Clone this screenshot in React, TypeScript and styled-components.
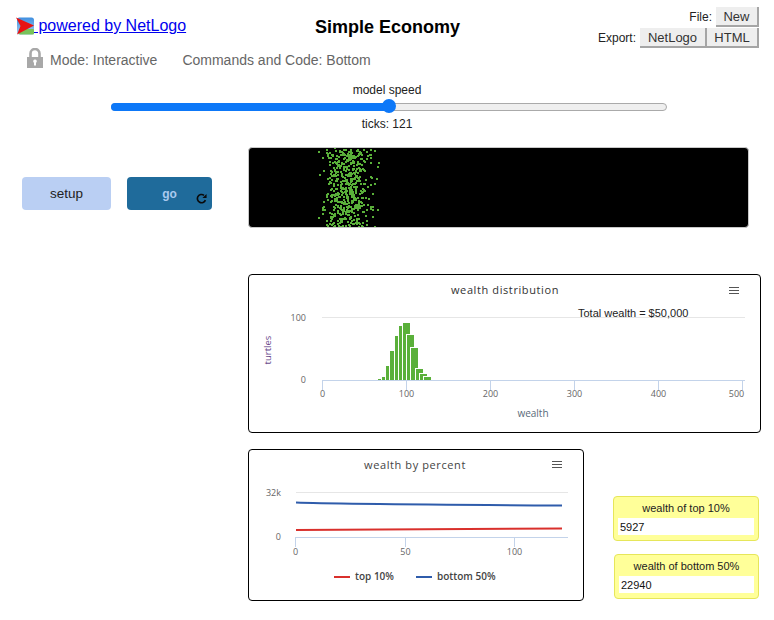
import React from 'react';
import styled, { createGlobalStyle } from 'styled-components';

const Global = createGlobalStyle`
  html, body { margin: 0; padding: 0; background: #fff; }
  body { font-family: "Liberation Sans", Arial, sans-serif; color: #000; }
`;

const Page = styled.div`
  width: 774px;
  height: 620px;
  overflow: hidden;
`;
const Header = styled.header`
  display: grid;
  grid-template-columns: 1fr auto 1fr;
  height: 49px;
  padding: 0 15px 0 16px;
  box-sizing: border-box;
`;
const BrandLink = styled.a`
  display: flex;
  align-items: flex-start;
  margin-top: 17px;
  height: 20px;
  font-size: 16px;
  line-height: 18px;
  color: #0000ee;
  text-decoration: underline;
  white-space: nowrap;
`;
const Title = styled.h1`
  margin: 17px 0 0;
  font-size: 18px;
  line-height: 20px;
  font-weight: bold;
`;
const Actions = styled.div`
  display: flex;
  flex-direction: column;
  align-items: flex-end;
  padding-top: 7px;
  gap: 1px;
`;
const ActionRow = styled.div`
  display: flex;
  align-items: center;
  font-size: 12px;
  color: #222;
`;
const ActionLabel = styled.span`
  margin-right: 4px;
`;
const FileButton = styled.button`
  height: 20px;
  width: ${p => p.$w}px;
  padding: 0;
  box-sizing: border-box;
  border: none;
  border-right: 2px solid #a5a5a5;
  border-bottom: 2px solid #a5a5a5;
  background: #eee;
  font: 13px "Liberation Sans", Arial, sans-serif;
  color: #333;
`;
const ModeRow = styled.div`
  display: flex;
  align-items: center;
  height: 22px;
  padding-left: 27px;
  font-size: 14px;
  color: #666;
`;
const LockIcon = styled.svg`
  margin-top: -4px;
`;
const ModeText = styled.span`
  margin-left: ${p => p.$gap}px;
`;
const SpeedPanel = styled.div`
  display: flex;
  flex-direction: column;
  align-items: center;
  width: 556px;
  margin: 12px 0 0 111px;
  font-size: 12px;
  color: #222;
`;
const SpeedLabel = styled.div`
  height: 14px;
  line-height: 14px;
  margin-left: -4px;
`;
const Track = styled.div`
  position: relative;
  width: 100%;
  height: 8px;
  margin: 6px 0;
  box-sizing: border-box;
  border: 1px solid #aaa;
  border-radius: 4px;
  background: #efefef;
`;
const TrackFill = styled.div`
  position: absolute;
  left: -1px;
  top: -1px;
  height: 8px;
  border-radius: 4px;
  background: #0d78f8;
`;
const Thumb = styled.div`
  position: absolute;
  top: -5px;
  width: 14px;
  height: 14px;
  margin-left: -7px;
  border-radius: 50%;
  background: #0d78f8;
`;
const Canvas = styled.div`
  display: grid;
  grid-template-columns: 248px 1fr;
  margin-top: 16px;
`;
const Controls = styled.div`
  display: flex;
  align-items: flex-start;
  gap: 16px;
  padding: 30px 0 0 22px;
`;
const ModelButton = styled.button`
  position: relative;
  width: ${p => p.$w}px;
  height: 33px;
  padding: 0;
  border: none;
  border-radius: 4px;
  background: ${p => (p.$active ? '#1f6b9b' : '#bacff3')};
  color: ${p => (p.$active ? '#a9c9ee' : '#222')};
  font: ${p => (p.$active ? 'bold 12px' : 'normal 13.5px')} "Liberation Sans", Arial, sans-serif;
`;
const ForeverIcon = styled.svg`
  position: absolute;
  right: 5px;
  bottom: 6px;
`;
const Stage = styled.div`
  display: flex;
  flex-direction: column;
`;
const World = styled.svg`
  display: block;
  width: 501px;
  height: 81px;
  box-sizing: border-box;
  border: 1px solid #c8c8c8;
  border-radius: 4px;
  background: #000;
  margin-bottom: 46px;
`;
const PlotCard = styled.div`
  width: ${p => p.$w}px;
  height: ${p => p.$h}px;
  box-sizing: border-box;
  border: 1px solid #000;
  border-radius: 4px;
  background: #fff;
  flex: none;
`;
const PlotSvg = styled.svg`
  display: block;
  width: 100%;
  height: 100%;
  font-family: "Open Sans", "DejaVu Sans", sans-serif;
`;
const BottomRow = styled.div`
  display: flex;
  align-items: flex-start;
  margin-top: 16px;
`;
const Monitors = styled.div`
  display: flex;
  flex-direction: column;
  align-items: flex-end;
  gap: 13px;
  width: 146px;
  margin: 47px 0 0 29px;
`;
const Monitor = styled.div`
  width: ${p => p.$w}px;
  height: 45px;
  box-sizing: border-box;
  padding: 0 4px;
  border: 1px solid #e6e65a;
  border-radius: 4px;
  background: #ffff99;
  font-size: 11px;
  color: #222;
`;
const MonitorLabel = styled.div`
  height: 21px;
  line-height: 23px;
  text-align: center;
`;
const MonitorValue = styled.div`
  height: 17px;
  line-height: 18px;
  padding-left: 2px;
  background: #fff;
  color: #111;
`;

function Logo() {
  return (
    <svg width="18" height="18" viewBox="0 0 18 18">
      <defs>
        <linearGradient id="sky" x1="0" y1="0" x2="0" y2="1">
          <stop offset="0" stopColor="#3f8fe0" />
          <stop offset="1" stopColor="#a5cdf0" />
        </linearGradient>
      </defs>
      <rect x="1" y="0.5" width="17" height="17" rx="2.5" fill="url(#sky)" />
      <rect x="3" y="12" width="15" height="5.5" rx="1" fill="#79c25a" />
      <path d="M0 0.5 L18 8.5 L1 17.5 L4.5 9 Z" fill="#e81313" />
    </svg>
  );
}

function Lock() {
  return (
    <LockIcon width="16" height="20" viewBox="0 0 16 20">
      <path d="M3.5 9V5.5a4.5 4.5 0 0 1 9 0V9" fill="none" stroke="#a8a8a8" strokeWidth="2.6" />
      <path fillRule="evenodd" d="M0 9h16v11H0z M8 11.5a1.8 1.8 0 0 0-1 3.3V17.5h2v-2.7a1.8 1.8 0 0 0-1-3.3z" fill="#a8a8a8" />
    </LockIcon>
  );
}

function makeDots() {
  let s = 12345;
  const r = () => {
    s = (s * 1664525 + 1013904223) % 4294967296;
    return s / 4294967296;
  };
  const dots: { x: number; y: number }[] = [];
  for (let i = 0; i < 520; i++) {
    const g = (r() + r() + r() + r() - 2) * 1.73;
    dots.push({ x: Math.round(99 + g * 12.5), y: Math.round(r() * 80) });
  }
  return dots;
}
const dots = makeDots();

const ox1 = 249;
const oy1 = 275;
const bars = [
  [378, 381, 379], [382, 385, 377], [386, 389, 366], [390, 394, 351], [395, 398, 336], [399, 402, 326],
  [403, 410, 323], [407, 414, 335], [411, 418, 348], [416, 423, 369], [420, 427, 374], [424, 431, 377],
];
const GREEN = '#5ab03a';
const AXIS = '#c3d3ea';
const GRIDC = '#e6e6e6';
const LABEL = '#666666';

function Burger({ x, y }: { x: number; y: number }) {
  return (
    <g stroke="#555" strokeWidth="1">
      <line x1={x} x2={x + 10} y1={y + 0.5} y2={y + 0.5} />
      <line x1={x} x2={x + 10} y1={y + 3.5} y2={y + 3.5} />
      <line x1={x} x2={x + 10} y1={y + 6.5} y2={y + 6.5} />
    </g>
  );
}

function DistributionPlot() {
  return (
    <PlotSvg viewBox="0 0 511 157">
      <text x={505 - ox1} y={294 - oy1} textAnchor="middle" fontSize="11" letterSpacing="0.6" fill="#333">wealth distribution</text>
      <Burger x={729 - ox1} y={287 - oy1} />
      <line x1={322 - ox1} x2={745 - ox1} y1={317.5 - oy1} y2={317.5 - oy1} stroke={GRIDC} />
      <line x1={322 - ox1} x2={745 - ox1} y1={380.5 - oy1} y2={380.5 - oy1} stroke={AXIS} />
      {[322.5, 406.5, 490.5, 574.5, 658.5, 742.5].map((x, i) => (
        <g key={x}>
          <line x1={x - ox1} x2={x - ox1} y1={380 - oy1} y2={390 - oy1} stroke={AXIS} />
          <text x={x - ox1 + (i === 5 ? -6 : 0)} y={397 - oy1} textAnchor="middle" fontSize="9" fill={LABEL}>{i * 100}</text>
        </g>
      ))}
      <text x={306 - ox1} y={321 - oy1} textAnchor="end" fontSize="9" fill={LABEL}>100</text>
      <text x={306 - ox1} y={383 - oy1} textAnchor="end" fontSize="9" fill={LABEL}>0</text>
      <text transform={`translate(${271 - ox1} ${350 - oy1}) rotate(-90)`} textAnchor="middle" fontSize="9.5" fill="#6a4a8c">turtles</text>
      <text x={533 - ox1} y={417 - oy1} textAnchor="middle" fontSize="10" fill="#5a6a7a">wealth</text>
      {bars.map(([a, b, t]) => (
        <g key={a}>
          <rect x={a - 1 - ox1} y={t - 1 - oy1} width={b - a + 1} height={381 - t} fill="#fff" />
          <rect x={a - ox1} y={t - oy1} width={b - a} height={380 - t} fill={GREEN} />
        </g>
      ))}
      <text x={578 - ox1} y={317 - oy1} fontSize="11" fontFamily='"Liberation Sans", Arial, sans-serif' fill="#222">Total wealth = $50,000</text>
    </PlotSvg>
  );
}

const ox2 = 249;
const oy2 = 450;
function PercentPlot() {
  return (
    <PlotSvg viewBox="0 0 334 150">
      <text x={415 - ox2} y={469 - oy2} textAnchor="middle" fontSize="11" letterSpacing="0.6" fill="#444">wealth by percent</text>
      <Burger x={552 - ox2} y={461 - oy2} />
      <line x1={296 - ox2} x2={568 - ox2} y1={492.5 - oy2} y2={492.5 - oy2} stroke={GRIDC} />
      <line x1={296 - ox2} x2={568 - ox2} y1={537.5 - oy2} y2={537.5 - oy2} stroke={AXIS} />
      {[[295.5, 0], [405.5, 50], [514.5, 100]].map(([x, v]) => (
        <g key={x}>
          <line x1={x - ox2} x2={x - ox2} y1={537 - oy2} y2={547 - oy2} stroke={AXIS} />
          <text x={x - ox2} y={555 - oy2} textAnchor="middle" fontSize="9" fill={LABEL}>{v}</text>
        </g>
      ))}
      <text x={281 - ox2} y={496 - oy2} textAnchor="end" fontSize="9" fill={LABEL}>32k</text>
      <text x={281 - ox2} y={540 - oy2} textAnchor="end" fontSize="9" fill={LABEL}>0</text>
      <path d={`M${296 - ox2} ${502.5 - oy2} C${330 - ox2} ${504 - oy2} ${400 - ox2} ${504.5 - oy2} ${562 - ox2} ${505.5 - oy2}`} fill="none" stroke="#2f5cab" strokeWidth="2" />
      <path d={`M${296 - ox2} ${530 - oy2} L${562 - ox2} ${528.5 - oy2}`} fill="none" stroke="#d9302c" strokeWidth="2" />
      <line x1={334 - ox2} x2={350 - ox2} y1={577 - oy2} y2={577 - oy2} stroke="#d9302c" strokeWidth="2" />
      <text x={355 - ox2} y={580 - oy2} fontSize="10" fontWeight="600" fill="#444">top 10%</text>
      <line x1={416 - ox2} x2={432 - ox2} y1={577 - oy2} y2={577 - oy2} stroke="#2f5cab" strokeWidth="2" />
      <text x={437 - ox2} y={580 - oy2} fontSize="10" fontWeight="600" fill="#444">bottom 50%</text>
    </PlotSvg>
  );
}

export default function App() {
  return (
    <Page>
      <Global />
      <Header>
        <BrandLink href="#">
          <Logo />
          <span>&nbsp;powered by NetLogo</span>
        </BrandLink>
        <Title>Simple Economy</Title>
        <Actions>
          <ActionRow>
            <ActionLabel>File:</ActionLabel>
            <FileButton $w={43}>New</FileButton>
          </ActionRow>
          <ActionRow>
            <ActionLabel>Export:</ActionLabel>
            <FileButton $w={67}>NetLogo</FileButton>
            <FileButton $w={52}>HTML</FileButton>
          </ActionRow>
        </Actions>
      </Header>
      <ModeRow>
        <Lock />
        <ModeText $gap={7}>Mode: Interactive</ModeText>
        <ModeText $gap={25}>Commands and Code: Bottom</ModeText>
      </ModeRow>
      <SpeedPanel>
        <SpeedLabel>model speed</SpeedLabel>
        <Track>
          <TrackFill style={{ width: 278 }} />
          <Thumb style={{ left: 277 }} />
        </Track>
        <SpeedLabel>ticks: 121</SpeedLabel>
      </SpeedPanel>
      <Canvas>
        <Controls>
          <ModelButton $w={89}>setup</ModelButton>
          <ModelButton $w={85} $active>
            go
            <ForeverIcon width="11" height="11" viewBox="0 0 24 24" fill="none" stroke="#0a0a0a" strokeWidth="3.6">
              <path d="M20.5 15.5A9 9 0 1 1 17.5 5" />
              <path d="M23 2v9h-9z" fill="#0a0a0a" stroke="none" />
            </ForeverIcon>
          </ModelButton>
        </Controls>
        <Stage>
          <World viewBox="0 0 499 79" preserveAspectRatio="none">
            {dots.map((d, i) => (
              <rect key={i} x={d.x - 1} y={d.y - 1} width="2" height="2" fill={GREEN} />
            ))}
          </World>
          <PlotCard $w={513} $h={159}>
            <DistributionPlot />
          </PlotCard>
          <BottomRow>
            <PlotCard $w={336} $h={152}>
              <PercentPlot />
            </PlotCard>
            <Monitors>
              <Monitor $w={146}>
                <MonitorLabel>wealth of top 10%</MonitorLabel>
                <MonitorValue>5927</MonitorValue>
              </Monitor>
              <Monitor $w={145}>
                <MonitorLabel>wealth of bottom 50%</MonitorLabel>
                <MonitorValue>22940</MonitorValue>
              </Monitor>
            </Monitors>
          </BottomRow>
        </Stage>
      </Canvas>
    </Page>
  );
}
